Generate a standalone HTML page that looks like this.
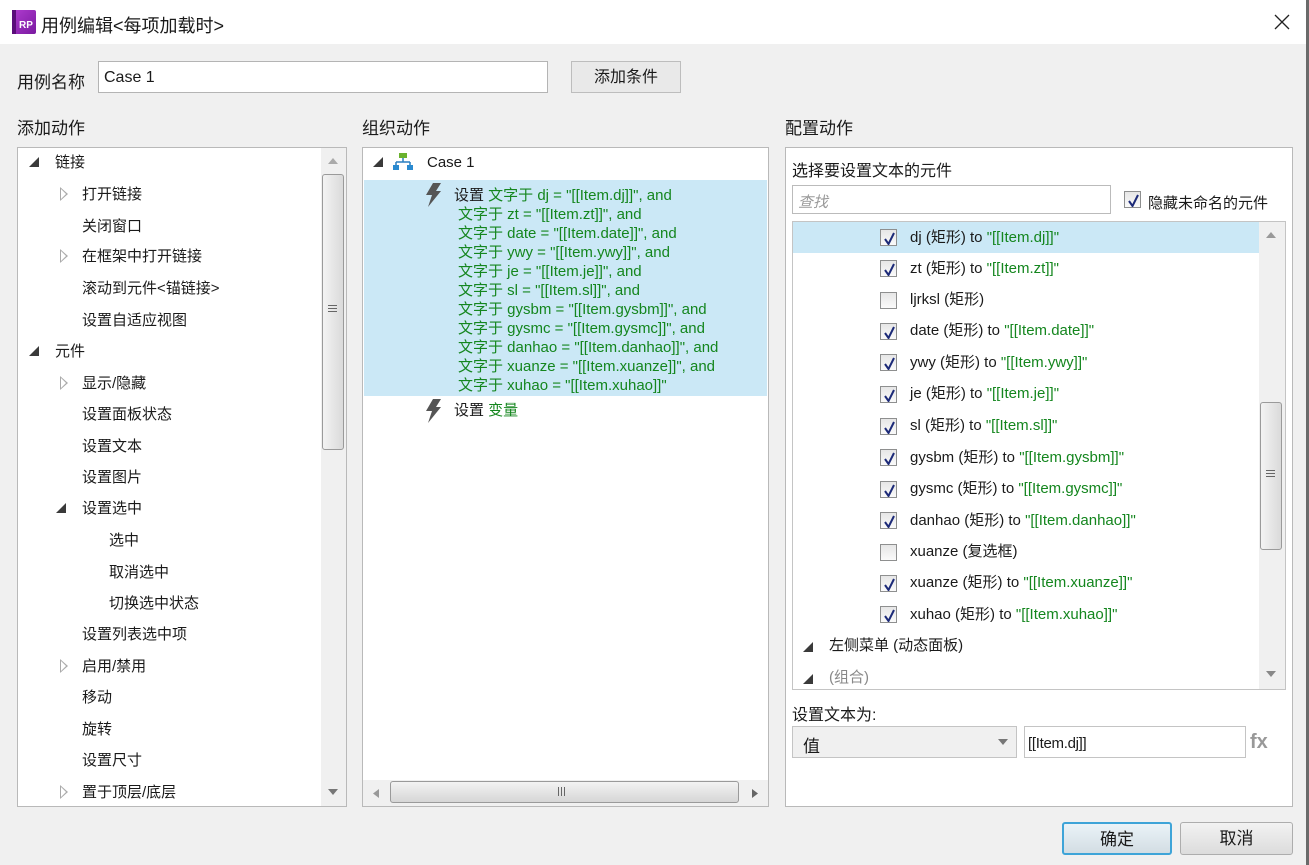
<!DOCTYPE html>
<html><head><meta charset="utf-8"><style>
*{box-sizing:border-box;margin:0;padding:0}
body{width:1309px;height:865px;overflow:hidden;background:#f0f0f0;font-family:"Liberation Sans","Noto Sans CJK SC",sans-serif;font-size:15px;color:#1a1a1a;position:relative}
.a{position:absolute;white-space:nowrap}
.t{position:absolute;white-space:nowrap;line-height:18px}
.g{color:#14861e}
.box{position:absolute;background:#fff;border:1px solid #b9b9b9}
.tri{position:absolute;width:0;height:0;border-left:10px solid transparent;border-bottom:10px solid #3a3a3a}
.otri{position:absolute;width:0;height:0;border-top:7px solid transparent;border-bottom:7px solid transparent;border-left:8px solid #aaa}
.otri:after{content:"";position:absolute;left:-7px;top:-5px;border-top:5px solid transparent;border-bottom:5px solid transparent;border-left:5px solid #fff}
.cb{position:absolute;width:17px;height:17px;border:1px solid #8e8f8f;background:linear-gradient(#e6e6e6,#fafafa)}
.cb svg{position:absolute;left:3px;top:2px}
.btn{position:absolute;border:1px solid #adadad;background:linear-gradient(#f2f2f2,#dcdcdc);border-radius:3px;text-align:center;font-size:17px}
.vs{position:absolute;background:#f0f0f0}
.thumb{position:absolute;background:linear-gradient(90deg,#f3f3f3,#dadada);border:1px solid #9a9a9a;border-radius:3px}
</style></head><body>
<div class="a" style="left:0;top:0;width:1309px;height:44px;background:#fff"></div>
<div class="a" style="left:1306px;top:0;width:3px;height:865px;background:#6a6a6a"></div>
<div class="a" style="left:12px;top:10px;width:24px;height:24px;background:linear-gradient(135deg,#b03cd0,#7a1aa0);border-radius:2px"></div>
<div class="a" style="left:12px;top:10px;width:4px;height:24px;background:#5a0d7a"></div>
<div class="a" style="left:19px;top:20px;font-size:10px;color:#fff;font-weight:bold">RP</div>
<div class="a" style="left:41px;top:12px;font-size:18px">用例编辑&lt;每项加载时&gt;</div>
<svg class="a" style="left:1274px;top:14px" width="16" height="16"><path d="M1 1L15 15M15 1L1 15" stroke="#222" stroke-width="1.3"/></svg>

<div class="a" style="left:17px;top:68px;font-size:17px">用例名称</div>
<div class="box" style="left:98px;top:61px;width:450px;height:32px;border-color:#b4b4b4"></div>
<div class="a" style="left:104px;top:69px;font-size:16px">Case 1</div>
<div class="btn" style="left:571px;top:61px;width:110px;height:32px;line-height:32px;font-size:16px;border-color:#bdbdbd;background:#e9e9e9;border-radius:0">添加条件</div>

<div class="a" style="left:17px;top:114px;font-size:17px">添加动作</div>
<div class="a" style="left:362px;top:114px;font-size:17px">组织动作</div>
<div class="a" style="left:785px;top:114px;font-size:17px">配置动作</div>

<!-- left panel -->
<div class="box" style="left:17px;top:147px;width:330px;height:660px"></div>
<div class="vs" style="left:321px;top:148px;width:25px;height:658px"></div>
<svg class="a" style="left:328px;top:158px" width="10" height="6"><path d="M0 6L5 0L10 6Z" fill="#aaa"/></svg>
<svg class="a" style="left:328px;top:789px" width="10" height="6"><path d="M0 0L5 6L10 0Z" fill="#777"/></svg>
<div class="thumb" style="left:322px;top:174px;width:22px;height:276px"></div>
<div class="a" style="left:328px;top:305px;width:9px;height:1px;background:#666;box-shadow:0 3px 0 #666,0 6px 0 #666"></div>

<div class="tri" style="left:29px;top:157px"></div><div class="t" style="left:55px;top:154px">链接</div>
<div class="otri" style="left:60px;top:187px"></div><div class="t" style="left:82px;top:186px">打开链接</div>
<div class="t" style="left:82px;top:218px">关闭窗口</div>
<div class="otri" style="left:60px;top:249px"></div><div class="t" style="left:82px;top:248px">在框架中打开链接</div>
<div class="t" style="left:82px;top:280px">滚动到元件&lt;锚链接&gt;</div>
<div class="t" style="left:82px;top:312px">设置自适应视图</div>
<div class="tri" style="left:29px;top:346px"></div><div class="t" style="left:55px;top:343px">元件</div>
<div class="otri" style="left:60px;top:376px"></div><div class="t" style="left:82px;top:375px">显示/隐藏</div>
<div class="t" style="left:82px;top:406px">设置面板状态</div>
<div class="t" style="left:82px;top:438px">设置文本</div>
<div class="t" style="left:82px;top:469px">设置图片</div>
<div class="tri" style="left:56px;top:503px"></div><div class="t" style="left:82px;top:500px">设置选中</div>
<div class="t" style="left:109px;top:532px">选中</div>
<div class="t" style="left:109px;top:564px">取消选中</div>
<div class="t" style="left:109px;top:595px">切换选中状态</div>
<div class="t" style="left:82px;top:626px">设置列表选中项</div>
<div class="otri" style="left:60px;top:659px"></div><div class="t" style="left:82px;top:658px">启用/禁用</div>
<div class="t" style="left:82px;top:689px">移动</div>
<div class="t" style="left:82px;top:721px">旋转</div>
<div class="t" style="left:82px;top:752px">设置尺寸</div>
<div class="otri" style="left:60px;top:785px"></div><div class="t" style="left:82px;top:784px">置于顶层/底层</div>

<!-- middle panel -->
<div class="box" style="left:362px;top:147px;width:407px;height:660px"></div>
<div class="a" style="left:364px;top:180px;width:403px;height:216px;background:#cbe8f6"></div>
<div class="tri" style="left:373px;top:157px"></div>
<svg class="a" style="left:393px;top:153px" width="20" height="18"><rect x="6" y="0" width="8" height="5" fill="#6ab22e"/><path d="M10 5V9M3 9H17M3 9V12M17 9V12" stroke="#2a7fc0" stroke-width="1.5" fill="none"/><rect x="0" y="12" width="6" height="5" fill="#2a8ad0"/><rect x="14" y="12" width="6" height="5" fill="#2a8ad0"/></svg>
<div class="t" style="left:427px;top:154px">Case 1</div>
<svg class="a" style="left:424px;top:183px" width="18" height="24"><path d="M9 0L17 0L12 8L17 8L4 24L8 12L2 12Z" fill="#555"/></svg>
<div style="position:absolute;left:454px;top:186px;line-height:19px;font-size:15px">
<div>设置 <span class="g">文字于 dj = "[[Item.dj]]", and</span></div>
<div class="g" style="margin-left:4px">文字于 zt = "[[Item.zt]]", and<br>文字于 date = "[[Item.date]]", and<br>文字于 ywy = "[[Item.ywy]]", and<br>文字于 je = "[[Item.je]]", and<br>文字于 sl = "[[Item.sl]]", and<br>文字于 gysbm = "[[Item.gysbm]]", and<br>文字于 gysmc = "[[Item.gysmc]]", and<br>文字于 danhao = "[[Item.danhao]]", and<br>文字于 xuanze = "[[Item.xuanze]]", and<br>文字于 xuhao = "[[Item.xuhao]]"</div>
</div>
<svg class="a" style="left:424px;top:399px" width="18" height="24"><path d="M9 0L17 0L12 8L17 8L4 24L8 12L2 12Z" fill="#555"/></svg>
<div class="t" style="left:454px;top:402px">设置 <span class="g">变量</span></div>
<div class="vs" style="left:363px;top:780px;width:405px;height:26px"></div>
<svg class="a" style="left:373px;top:789px" width="6" height="9"><path d="M6 0L0 4.5L6 9Z" fill="#999"/></svg>
<svg class="a" style="left:752px;top:789px" width="6" height="9"><path d="M0 0L6 4.5L0 9Z" fill="#666"/></svg>
<div class="thumb" style="left:390px;top:781px;width:349px;height:22px;background:linear-gradient(#f3f3f3,#d6d6d6)"></div>
<div class="a" style="left:558px;top:787px;width:1px;height:9px;background:#666;box-shadow:3px 0 0 #666,6px 0 0 #666"></div>

<!-- right panel -->
<div class="box" style="left:785px;top:147px;width:508px;height:660px"></div>
<div class="a" style="left:792px;top:157px;font-size:16px">选择要设置文本的元件</div>
<div class="box" style="left:792px;top:185px;width:319px;height:29px;border-color:#bbb"></div>
<div class="a" style="left:798px;top:191px;font-size:15px;color:#999;font-style:italic">查找</div>
<div class="cb" style="left:1124px;top:191px"><svg width="11" height="13"><path d="M1 7L4.5 12L10 1" stroke="#1c2a78" stroke-width="2" fill="none"/></svg></div>
<div class="a" style="left:1148px;top:192px">隐藏未命名的元件</div>
<div class="box" style="left:792px;top:221px;width:494px;height:469px;border-color:#c4c4c4"></div>
<div class="a" style="left:793px;top:222px;width:466px;height:31px;background:#cbe8f6"></div>
<div class="vs" style="left:1259px;top:222px;width:26px;height:467px"></div>
<svg class="a" style="left:1266px;top:232px" width="10" height="6"><path d="M0 6L5 0L10 6Z" fill="#999"/></svg>
<svg class="a" style="left:1266px;top:671px" width="10" height="6"><path d="M0 0L5 6L10 0Z" fill="#888"/></svg>
<div class="thumb" style="left:1260px;top:402px;width:22px;height:148px"></div>
<div class="a" style="left:1266px;top:470px;width:9px;height:1px;background:#666;box-shadow:0 3px 0 #666,0 6px 0 #666"></div>

<div class="cb" style="left:880px;top:229px"><svg width="11" height="13"><path d="M1 7L4.5 12L10 1" stroke="#1c2a78" stroke-width="2" fill="none"/></svg></div><div class="t" style="left:910px;top:229px">dj (矩形) to <span class="g">"[[Item.dj]]"</span></div>
<div class="cb" style="left:880px;top:260px"><svg width="11" height="13"><path d="M1 7L4.5 12L10 1" stroke="#1c2a78" stroke-width="2" fill="none"/></svg></div><div class="t" style="left:910px;top:260px">zt (矩形) to <span class="g">"[[Item.zt]]"</span></div>
<div class="cb" style="left:880px;top:292px"></div><div class="t" style="left:910px;top:291px">ljrksl (矩形)</div>
<div class="cb" style="left:880px;top:323px"><svg width="11" height="13"><path d="M1 7L4.5 12L10 1" stroke="#1c2a78" stroke-width="2" fill="none"/></svg></div><div class="t" style="left:910px;top:322px">date (矩形) to <span class="g">"[[Item.date]]"</span></div>
<div class="cb" style="left:880px;top:354px"><svg width="11" height="13"><path d="M1 7L4.5 12L10 1" stroke="#1c2a78" stroke-width="2" fill="none"/></svg></div><div class="t" style="left:910px;top:354px">ywy (矩形) to <span class="g">"[[Item.ywy]]"</span></div>
<div class="cb" style="left:880px;top:386px"><svg width="11" height="13"><path d="M1 7L4.5 12L10 1" stroke="#1c2a78" stroke-width="2" fill="none"/></svg></div><div class="t" style="left:910px;top:385px">je (矩形) to <span class="g">"[[Item.je]]"</span></div>
<div class="cb" style="left:880px;top:418px"><svg width="11" height="13"><path d="M1 7L4.5 12L10 1" stroke="#1c2a78" stroke-width="2" fill="none"/></svg></div><div class="t" style="left:910px;top:417px">sl (矩形) to <span class="g">"[[Item.sl]]"</span></div>
<div class="cb" style="left:880px;top:449px"><svg width="11" height="13"><path d="M1 7L4.5 12L10 1" stroke="#1c2a78" stroke-width="2" fill="none"/></svg></div><div class="t" style="left:910px;top:449px">gysbm (矩形) to <span class="g">"[[Item.gysbm]]"</span></div>
<div class="cb" style="left:880px;top:481px"><svg width="11" height="13"><path d="M1 7L4.5 12L10 1" stroke="#1c2a78" stroke-width="2" fill="none"/></svg></div><div class="t" style="left:910px;top:480px">gysmc (矩形) to <span class="g">"[[Item.gysmc]]"</span></div>
<div class="cb" style="left:880px;top:512px"><svg width="11" height="13"><path d="M1 7L4.5 12L10 1" stroke="#1c2a78" stroke-width="2" fill="none"/></svg></div><div class="t" style="left:910px;top:512px">danhao (矩形) to <span class="g">"[[Item.danhao]]"</span></div>
<div class="cb" style="left:880px;top:544px"></div><div class="t" style="left:910px;top:543px">xuanze (复选框)</div>
<div class="cb" style="left:880px;top:575px"><svg width="11" height="13"><path d="M1 7L4.5 12L10 1" stroke="#1c2a78" stroke-width="2" fill="none"/></svg></div><div class="t" style="left:910px;top:574px">xuanze (矩形) to <span class="g">"[[Item.xuanze]]"</span></div>
<div class="cb" style="left:880px;top:606px"><svg width="11" height="13"><path d="M1 7L4.5 12L10 1" stroke="#1c2a78" stroke-width="2" fill="none"/></svg></div><div class="t" style="left:910px;top:606px">xuhao (矩形) to <span class="g">"[[Item.xuhao]]"</span></div>
<div class="tri" style="left:803px;top:642px"></div><div class="t" style="left:829px;top:637px">左侧菜单 (动态面板)</div>
<div class="tri" style="left:803px;top:674px"></div><div class="t" style="left:829px;top:669px;color:#888">(组合)</div>

<div class="a" style="left:792px;top:701px;font-size:16px">设置文本为:</div>
<div class="a" style="left:792px;top:726px;width:225px;height:32px;border:1px solid #c4c4c4;background:#f0f0f0"></div>
<div class="a" style="left:803px;top:732px;font-size:17px">值</div>
<svg class="a" style="left:998px;top:739px" width="10" height="6"><path d="M0 0L5 6L10 0Z" fill="#777"/></svg>
<div class="box" style="left:1024px;top:726px;width:222px;height:32px;border-color:#c4c4c4"></div>
<div class="a" style="left:1028px;top:735px;font-size:15px;letter-spacing:-0.3px">[[Item.dj]]</div>
<div class="a" style="left:1250px;top:731px;font-size:20px;font-weight:bold;color:#999">fx</div>

<div class="btn" style="left:1062px;top:822px;width:110px;height:33px;line-height:31px;border:2px solid #3ea4d8;background:linear-gradient(#eaf3f8,#d3dde3)">确定</div>
<div class="btn" style="left:1180px;top:822px;width:113px;height:33px;line-height:31px">取消</div>
</body></html>
